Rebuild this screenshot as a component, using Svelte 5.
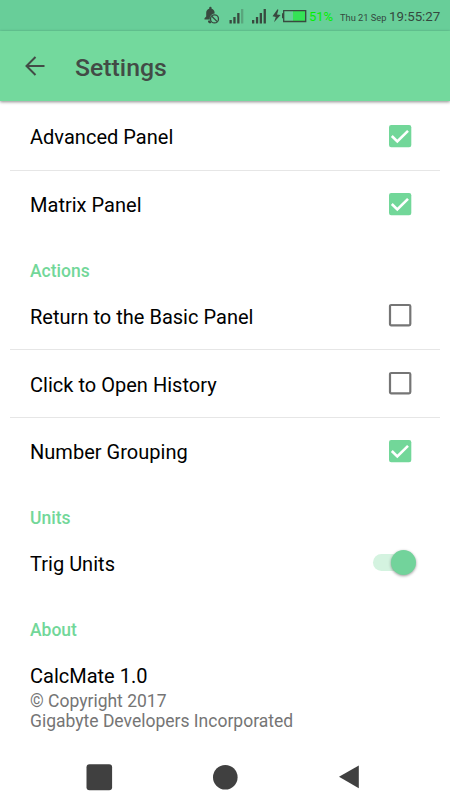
<script>
  const sections = [
    { rows: [
      { label: 'Advanced Panel', checked: true },
      { label: 'Matrix Panel', checked: true }
    ] },
    { title: 'Actions', rows: [
      { label: 'Return to the Basic Panel', checked: false },
      { label: 'Click to Open History', checked: false },
      { label: 'Number Grouping', checked: true }
    ] },
    { title: 'Units', rows: [{ label: 'Trig Units', toggle: true }] }
  ];
</script>

<div class="screen">
  <div class="status">
    <svg class="indicators" width="105" height="31" viewBox="203 0 105 31">
      <g fill="#38493f">
        <path d="M204.500 19.500v-1.200l1.700-1.800v-3.800c0-2 1.200-3.500 3-4v-.7a1.200 1.200 0 0 1 2.400 0v.7c1.800.5 3 2 3 4v.8a5 5 0 0 0-4.800 6z" />
        <path d="M208.300 20.500h2a5 5 0 0 0 1 1.900a1.700 1.700 0 0 1-3-1.900z" />
      </g>
      <circle cx="214.500" cy="18.900" r="4" fill="none" stroke="#38493f" stroke-width="1.300" />
      <path d="M211.800 16.200l5.400 5.400" stroke="#38493f" stroke-width="1.300" />
      <g fill="#38493f">
        <path d="M229.500 20h2.300v3.500h-2.300zM233.300 17h2.300v6.500h-2.300zM237.200 13h2.300v10.500h-2.300z" />
        <path d="M241 9h2.300v14.500H241z" opacity=".3" />
        <path d="M252 20h2.300v3.500H252zM255.900 17h2.300v6.500h-2.300zM259.700 13h2.300v10.500h-2.300zM263.600 9h2.300v14.500h-2.300z" />
        <path d="M277.500 9.300l-5 7 3.300.6-1.800 5.400 6.600-7.300-3.600-.6 1.400-4.700z" />
        <path d="M282 13.300h1.700v5H282z" />
      </g>
      <path d="M293 11h12v10h-12z" fill="#35e256" />
      <path d="M283.700 10.700h22v10.800h-22z" fill="none" stroke="#38493f" stroke-width="1.300" />
    </svg>
    <span class="percent">51%</span>
    <span class="date">Thu 21 Sep</span>
    <span class="clock">19:55:27</span>
  </div>

  <header>
    <svg width="20" height="20" viewBox="0 0 20 20" fill="none" stroke="#424b46" stroke-width="2">
      <path d="M19.500 10H2M10.500 1L1.500 10l9 9" />
    </svg>
    <h1>Settings</h1>
  </header>

  <main>
    {#each sections as section}
      {#if section.title}<h2>{section.title}</h2>{/if}
      <div class="group">
        {#each section.rows as row}
          <div class="row">
            <span>{row.label}</span>
            {#if row.toggle}
              <div class="toggle"><i></i></div>
            {:else}
              <svg class="check" width="24" height="24" viewBox="0 0 24 24" fill="none">
                {#if row.checked}
                  <rect x="1" y="1" width="22.300" height="22.300" rx="2.200" fill="#72d799" />
                  <path d="M3.800 12l5.500 5.500L20 6.800" stroke="#fff" stroke-width="2.600" />
                {:else}
                  <rect x="2" y="2" width="20.300" height="20.300" rx="1.200" stroke="#757575" stroke-width="2.200" />
                {/if}
              </svg>
            {/if}
          </div>
        {/each}
      </div>
    {/each}
    <h2>About</h2>
    <div class="about">
      <div class="name">CalcMate 1.0</div>
      <p>© Copyright 2017<br />Gigabyte Developers Incorporated</p>
    </div>
  </main>

  <nav>
    <svg width="27" height="27" viewBox="0 0 27 27"><rect x=".5" y=".3" width="25.600" height="26" rx="3" fill="#404040" /></svg>
    <svg width="26" height="27" viewBox="0 0 26 27"><circle cx="13.300" cy="13.200" r="12.300" fill="#404040" /></svg>
    <svg width="26" height="27" viewBox="0 0 26 27"><path d="M3 12.700L22.800 1.400v22.800z" fill="#404040" /></svg>
  </nav>
</div>

<style>
  :global(body) { margin: 0; background: #fff; }
  .screen {
    width: 450px;
    height: 800px;
    display: flex;
    flex-direction: column;
    overflow: hidden;
    background: #fff;
    color: #000;
    font-family: Roboto, sans-serif;
  }
  .status {
    height: 31px;
    flex: none;
    display: flex;
    align-items: baseline;
    padding-left: 203px;
    background: #68ce99;
    color: #34483e;
    line-height: 33px;
    white-space: nowrap;
  }
  .indicators { align-self: flex-start; flex: none; }
  .percent { width: 32px; padding-left: 1px; box-sizing: border-box; color: #00f000; font-size: 13px; }
  .date { width: 49px; font-size: 9.300px; }
  .clock { font-size: 13.300px; }
  header {
    height: 70px;
    flex: none;
    display: flex;
    align-items: center;
    gap: 30px;
    padding-left: 25px;
    box-sizing: border-box;
    background: #73d99d;
    box-shadow: 0 1px 3px rgba(0, 0, 0, .45);
  }
  h1 { margin: 4px 0 0; font-size: 24.800px; font-weight: 500; line-height: 30px; color: #424b46; }
  main { flex: 1; padding-top: 1.500px; }
  .group { padding: 0 10px; }
  .row {
    height: 67.500px;
    box-sizing: border-box;
    display: flex;
    align-items: center;
    justify-content: space-between;
    padding: 0 28px 0 20px;
    font-size: 20px;
  }
  .row + .row { border-top: 1px solid #e6e6e6; }
  .row span { padding-top: 2px; letter-spacing: .02px; }
  .check { margin-top: -1px; }
  .toggle {
    width: 41px;
    height: 17px;
    margin-right: -2px;
    border-radius: 9px;
    background: #d4f3e0;
    display: flex;
    align-items: center;
    justify-content: flex-end;
  }
  .toggle i {
    width: 25px;
    height: 25px;
    margin-right: -2px;
    flex: none;
    border-radius: 50%;
    background: #72d39b;
    box-shadow: 0 1px 3px rgba(0, 0, 0, .4);
  }
  h2 {
    height: 44.400px;
    box-sizing: border-box;
    margin: 0;
    padding: 22.600px 30px 0;
    font-size: 17.500px;
    line-height: 22px;
    font-weight: 500;
    color: #72d799;
  }
  .about { padding: 22.600px 30px 0; }
  .name { font-size: 20px; line-height: 26px; }
  p { margin: 1.600px 0 0; font-size: 17.500px; line-height: 20.500px; color: #757575; }
  nav {
    height: 46px;
    flex: none;
    display: flex;
    justify-content: space-between;
    padding: 10px 88px 0 86px;
    box-sizing: border-box;
  }
</style>
